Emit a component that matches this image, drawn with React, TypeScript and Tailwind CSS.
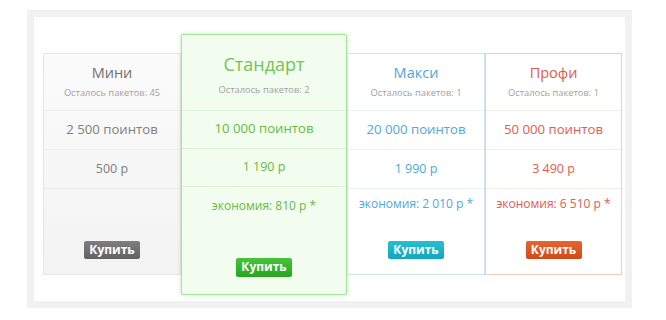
type Plan = {
  name: string;
  left: string;
  points: string;
  price: string;
  saving: string;
  card: string;
  line: string;
  title: string;
  text: string;
  btn: string;
};

const plans: Plan[] = [
  {
    name: "Мини",
    left: "Осталось пакетов: 45",
    points: "2 500 поинтов",
    price: "500 р",
    saving: "",
    card: "w-[138px] border border-[#e6e6e6] bg-gradient-to-b from-[#fbfbfb] to-[#f3f3f3]",
    line: "border-[#ececec]",
    title: "text-[#707070]",
    text: "text-[#808080]",
    btn: "bg-gradient-to-b from-[#7e7e7e] to-[#616161]",
  },
  {
    name: "Макси",
    left: "Осталось пакетов: 1",
    points: "20 000 поинтов",
    price: "1 990 р",
    saving: "экономия: 2 010 р *",
    card: "w-[138px] border border-[#cfe5f4] bg-white",
    line: "border-[#e9f1f7]",
    title: "text-[#4aa8d8]",
    text: "text-[#4eaad9]",
    btn: "bg-gradient-to-b from-[#25bfd2] to-[#12a7ba]",
  },
  {
    name: "Профи",
    left: "Осталось пакетов: 1",
    points: "50 000 поинтов",
    price: "3 490 р",
    saving: "экономия: 6 510 р *",
    card: "w-[137px] border border-[#f4c9c1] bg-white",
    line: "border-[#f6ebe8]",
    title: "text-[#e25a4a]",
    text: "text-[#e35c50]",
    btn: "bg-gradient-to-b from-[#e8642e] to-[#cf4a17]",
  },
];

function SmallCard({ p }: { p: Plan }) {
  return (
    <div className={`flex h-[222px] flex-col ${p.card}`}>
      <div className={`flex h-[57px] flex-col items-center border-b pt-[8px] ${p.line}`}>
        <div className={`text-[14.5px] leading-[22px] ${p.title}`}>{p.name}</div>
        <div className="mt-[3px] text-[9.3px] leading-[12px] text-[#a0a0a0]">{p.left}</div>
      </div>
      <div className={`flex h-[39px] items-center justify-center border-b text-[13.2px] ${p.line} ${p.text}`}>
        {p.points}
      </div>
      <div className={`flex h-[39px] items-center justify-center border-b text-[12.5px] ${p.line} ${p.text}`}>
        {p.price}
      </div>
      <div className={`flex h-[30px] items-center justify-center text-[12px] ${p.text}`}>{p.saving}</div>
      <div className="flex flex-1 items-end justify-center pb-[15px]">
        <div
          className={`flex h-[18px] w-[56px] items-center justify-center rounded-[2px] text-[12px] font-bold text-white ${p.btn}`}
        >
          Купить
        </div>
      </div>
    </div>
  );
}

function StandardCard() {
  const text = "text-[#66bb40]";
  const line = "border-[#dcf2d6]";
  return (
    <div className="flex h-[261px] w-[166px] flex-col rounded-[2px] border border-[#a3e598] bg-[#f2fdf0] shadow-[0_0_4px_rgba(120,220,100,0.45)]">
      <div className={`flex h-[76px] flex-col items-center border-b pt-[15px] ${line}`}>
        <div className="text-[18px] leading-[28px] text-[#72c450]">Стандарт</div>
        <div className="mt-[6px] text-[9.3px] leading-[12px] text-[#a0a0a0]">Осталось пакетов: 2</div>
      </div>
      <div className={`flex h-[38px] items-center justify-center border-b text-[13.2px] ${line} ${text}`}>
        10 000 поинтов
      </div>
      <div className={`flex h-[38px] items-center justify-center border-b text-[12.5px] ${line} ${text}`}>
        1 190 р
      </div>
      <div className={`flex h-[38px] items-center justify-center text-[12px] ${text}`}>экономия: 810 р *</div>
      <div className="flex flex-1 items-end justify-center pb-[17px]">
        <div className="flex h-[19px] w-[56px] items-center justify-center rounded-[2px] bg-gradient-to-b from-[#45c43a] to-[#28a520] text-[12px] font-bold text-white">
          Купить
        </div>
      </div>
    </div>
  );
}

export default function App() {
  return (
    <div
      className="h-[320px] w-[666px] bg-white pl-[27px] pt-[10px]"
      style={{ fontFamily: '"Open Sans", "Noto Sans", sans-serif' }}
    >
      <div className="flex h-[298px] w-[605px] items-center border-[7px] border-[#f1f1f1] bg-white pl-[9px] pt-[10px]">
        <SmallCard p={plans[0]} />
        <StandardCard />
        <SmallCard p={plans[1]} />
        <SmallCard p={plans[2]} />
      </div>
    </div>
  );
}
